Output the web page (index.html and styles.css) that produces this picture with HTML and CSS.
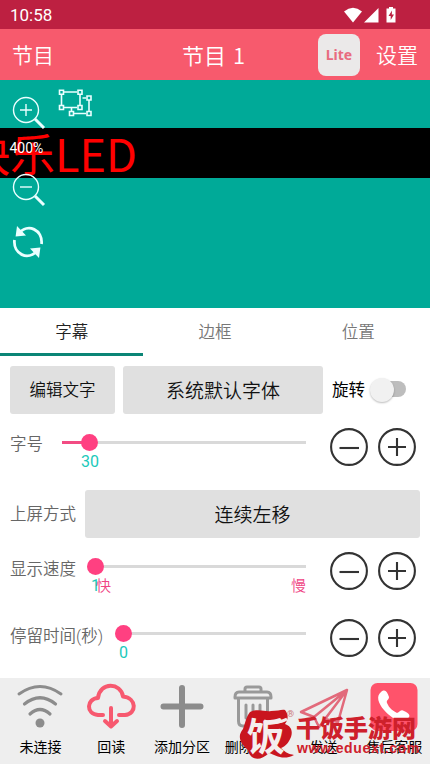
FILE: index.html
```html
<!DOCTYPE html>
<html lang="zh-CN">
<head>
<meta charset="utf-8">
<title>节目 1</title>
<link rel="stylesheet" href="styles.css">
</head>
<body>
<svg class="defs" aria-hidden="true">
  <symbol id="minus" viewBox="0 0 40 40"><circle cx="20" cy="20" r="17.900"/><path d="M10.500 21H30"/></symbol>
  <symbol id="plus" viewBox="0 0 40 40"><circle cx="20" cy="20" r="17.900"/><path d="M11 20H29M20 11V29"/></symbol>
</svg>
<div class="status">
  <span>10:58</span>
  <svg width="56" height="18" viewBox="0 0 56 18" fill="#fff"><path d="M0 5.500Q9 -1.800 18 5.500L9 16.500Z"/><path d="M34.500 2V16.500H20Z"/><path d="M45 2.500V1h4v1.500h2.500V16.500H42.500V2.500Z"/><path d="M48 4.500L44.500 10h2.200v4L50 8.500h-2.200Z" fill="#bd2041"/></svg>
</div>
<header class="bar">
  <span class="back">节目</span>
  <h1>节目 1</h1>
  <span class="lite">Lite</span>
  <span class="set">设置</span>
</header>
<section class="stage">
  <div class="screen"><span class="led">快乐LED</span></div>
  <svg class="tool zoom-in" width="36" height="36" viewBox="0 0 36 36"><circle cx="15" cy="15" r="12.500"/><path d="M9 15H21M15 9V21"/><path class="handle" d="M24 24L33 33"/></svg>
  <span class="percent">400%</span>
  <svg class="tool zoom-out" width="36" height="36" viewBox="0 0 36 36"><circle cx="15" cy="15" r="12.500"/><path d="M9 15H21"/><path class="handle" d="M24 24L33 33"/></svg>
  <svg class="tool refresh" width="32" height="32" viewBox="0 0 32 32"><path class="arc" d="M6.500 7.500C16-3.500 31 4 29.500 18M25.500 24.500C16 35.500 1 28 2.500 14"/><path class="head" d="M5 0L3.600 10.500L14 9.500ZM27 32L28.400 21.500L18 22.500Z"/></svg>
  <svg class="tool group" width="36" height="30" viewBox="0 0 36 30"><path d="M6 3H19M3.500 6V16M22 6V16M6 18.500H19M24.500 9H28M31 11V22M16 24.500H28M13.500 22V19"/><path d="M1.500 1.200h4v4h-4zM20 1.200h4v4h-4zM1.500 16.500h4v4h-4zM20 16.500h4v4h-4zM29 7h4v4h-4zM29 22.500h4v4h-4zM11.500 22.500h4v4h-4z"/></svg>
</section>
<nav class="tabs"><span class="active">字幕</span><span>边框</span><span>位置</span></nav>
<main>
  <div class="row fonts">
    <button class="edit">编辑文字</button>
    <button class="font">系统默认字体</button>
    <span class="rotate">旋转</span>
    <span class="switch"></span>
  </div>
  <div class="row size">
    <span class="label">字号</span>
    <div class="slider"><i class="fill"></i><i class="thumb"></i><b class="value">30</b></div>
    <div class="steps"><svg><use href="#minus"/></svg><svg><use href="#plus"/></svg></div>
  </div>
  <div class="row mode"><span class="label">上屏方式</span><button>连续左移</button></div>
  <div class="row speed">
    <span class="label">显示速度</span>
    <div class="slider"><i class="thumb"></i><b class="value">1</b><em class="fast">快</em><em class="slow">慢</em></div>
    <div class="steps"><svg><use href="#minus"/></svg><svg><use href="#plus"/></svg></div>
  </div>
  <div class="row stay">
    <span class="label">停留时间(秒)</span>
    <div class="slider"><i class="thumb"></i><b class="value">0</b></div>
    <div class="steps"><svg><use href="#minus"/></svg><svg><use href="#plus"/></svg></div>
  </div>
</main>
<footer>
  <div class="item"><svg width="50" height="50" viewBox="0 0 50 50" fill="none" stroke="#8c8c8c" stroke-linecap="round"><path stroke-width="3" d="M4 16Q25 1 46 16"/><path stroke-width="3.200" d="M9.500 26Q25 13.500 40.500 26"/><path stroke-width="3.200" d="M15 36Q25 27 35 36"/><circle cx="25" cy="45" r="4.500" fill="#8c8c8c" stroke="none"/></svg><span>未连接</span></div>
  <div class="item"><svg width="50" height="50" viewBox="0 -2 50 50" fill="none" stroke="#f7596f" stroke-width="4" stroke-linecap="round" stroke-linejoin="round"><path d="M17 35H12C-.5 34 .5 18.500 12 18C14 1.500 35 2.500 37 16.500C51 18 51 34 39 35H33"/><path d="M25 28V46M19 41L25 46.500L31 41"/></svg><span>回读</span></div>
  <div class="item"><svg width="50" height="50" viewBox="0 0 50 50" stroke="#8c8c8c" stroke-width="6" stroke-linecap="round"><path d="M25 10V47M6.500 28.500H43.500"/></svg><span>添加分区</span></div>
  <div class="item"><svg width="50" height="50" viewBox="0 -2 50 50" fill="none" stroke="#999" stroke-width="3" stroke-linejoin="round" stroke-linecap="round"><path d="M17 12V9Q17 7 19 7H31Q33 7 33 9V12M11 12H39Q43 12 43 17V18H7V17Q7 12 11 12M10.500 18V41Q10.500 46 15 46H35Q39.500 46 39.500 41V18M18 25V38M25 25V38M32 25V38"/></svg><span>删除分区</span></div>
  <div class="item"><svg width="50" height="50" viewBox="0 -2 50 50" fill="none" stroke="#e26a7b" stroke-width="2.500" stroke-linejoin="round"><path d="M48 10L2 32L15 37L20 47L26 39L39 42ZM48 10L15 37M48 10L26 39M48 10L20 47"/></svg><span>发送</span></div>
  <div class="item"><svg width="50" height="50" viewBox="0 0 50 50"><rect x="1.500" y="5" width="47" height="48" rx="7" fill="#ff536b"/><path d="M12 14C16 11 18 13 20 19C20 22 17 22 18 25C20 30 24 33 28 35C31 34 32 31 35 33C41 36 42 38 38 41C32 46 22 40 15 32C9 25 7 18 12 14Z" fill="#fff"/></svg><span>售后客服</span></div>
  <div class="watermark">
    <svg width="58" height="54" viewBox="0 0 58 54"><path d="M12 4C20 0 27 4 33 3C40 3 44 1 47 2C51 7 50 12 47 16C53 18 55 23 53 29C51 34 48 38 43 40C48 45 51 46 56 47C45 53 37 47 31 45C22 54 12 52 10 42C2 36-1 28 5 21C7 16 8 9 12 4Z"/><path class="swash" d="M26 13Q38 17 49 11"/><text x="9" y="42" font-size="38">饭</text></svg>
    <i>®</i>
    <div class="brand"><strong>千饭手游网</strong><small>www.eduext.com</small></div>
  </div>
</footer>
</body>
</html>
```

FILE: styles.css
```css
* { box-sizing: border-box; }
body { margin: 0; width: 430px; height: 764px; overflow: hidden; background: #fff; font-family: Roboto, "Noto Sans CJK SC", sans-serif; font-weight: 350; color: #111; display: flex; flex-direction: column; }
svg { display: block; flex: none; overflow: visible; }
.defs { position: absolute; width: 0; height: 0; }
.status { height: 29px; background: #bd2041; color: #fff; display: flex; align-items: center; justify-content: space-between; padding: 0 30px 0 10px; font-size: 17px; font-weight: 400; }
.bar { height: 51px; background: #f75a6d; color: #fff; display: flex; align-items: center; font-size: 21px; line-height: 30px; padding: 3px 12px 0; }
.back { width: 170px; }
h1 { margin: -4px 0 0; font: 350 22px/30px "Noto Sans CJK SC", sans-serif; width: 136px; word-spacing: 2px; }
.lite { width: 42px; height: 42px; border-radius: 8px; background: #ebe9e9; color: #e86b7f; font: 700 14px/42px "Noto Sans", sans-serif; text-align: center; margin-top: -3px; }
.set { margin-left: auto; }
.stage { height: 228px; background: #00aa98; position: relative; padding-top: 48px; }
.screen { height: 50px; background: #000; overflow: hidden; }
.led { display: block; margin: 0 0 0 -35px; font: 400 45px/50px "Noto Sans CJK SC", sans-serif; color: #f00; white-space: nowrap; }
.tool { position: absolute; fill: none; stroke: #eaffff; stroke-width: 1.400; }
.tool .handle { stroke-width: 3; }
.tool .arc { stroke-width: 2.800; }
.tool .head { fill: #eaffff; stroke: none; }
.zoom-in { left: 11px; top: 15px; }
.zoom-out { left: 11px; top: 92px; }
.refresh { left: 11.500px; top: 145.500px; }
.group { left: 58px; top: 9px; stroke-width: 1.600; }
.percent { position: absolute; left: 9.500px; top: 59px; color: #fff; font-size: 14px; line-height: 18px; font-weight: 400; }
.tabs { height: 48px; display: flex; font-size: 16.500px; color: #777; }
.tabs span { flex: 1; text-align: center; line-height: 49px; height: 48px; }
.tabs .active { color: #222; border-bottom: 3px solid #0b8576; }
main { height: 322px; padding: 10px 10px 0; }
.row { display: flex; }
button { border: 0; border-radius: 3px; background: #e0e0e0; font: inherit; font-size: 19px; color: #111; padding: 0 0 2px; height: 48px; }
.fonts { height: 62px; gap: 8px; }
.edit { width: 105px; font-size: 16.500px; }
.font { width: 200px; }
.rotate { font-size: 16.500px; line-height: 49px; font-weight: 400; color: #000; margin-left: 1px; }
.switch { width: 34px; height: 16px; border-radius: 8px; background: #bdbdbd; margin: 15px 0 0 -1px; position: relative; }
.switch::before { content: ""; position: absolute; left: -2px; top: -3.500px; width: 24px; height: 24px; border-radius: 50%; background: #f1f1f1; box-shadow: 0 1px 2px #0004; }
.label { font-size: 16.500px; color: #666; white-space: nowrap; line-height: 34px; }
.size { height: 62px; }
.mode { height: 61px; }
.mode .label { width: 75px; line-height: 49px; }
.mode button { flex: 1; }
.speed { height: 67px; }
.size .label { width: 52px; }
.speed .label { width: 86px; line-height: 37px; }
.stay .label { width: 114px; line-height: 37px; }
.slider { flex: 1; height: 3px; margin-top: 13px; background: #d9d9d9; position: relative; }
.speed .slider, .stay .slider { margin-top: 14px; }
.fill { position: absolute; left: 0; top: 0; width: 28px; height: 3px; background: #f24c83; }
.thumb { position: absolute; left: -9px; top: -7px; width: 17px; height: 17px; border-radius: 50%; background: #ff4081; }
.size .thumb { left: 19px; }
.value, .slider em { position: absolute; top: 11px; font-size: 16px; line-height: 20px; font-weight: 400; font-style: normal; color: #1cc9ba; white-space: nowrap; }
.size .value { left: 19px; }
.speed .value { left: -5px; }
.stay .value { left: -5px; }
.slider em { color: #ef4383; font-size: 15px; font-weight: 350; }
.slider .fast { left: 0; }
.slider .slow { right: 0; }
.steps { display: flex; gap: 7.500px; margin: -1px 3.500px 0 23px; }
.steps svg { width: 40px; height: 40px; fill: none; stroke: #333; stroke-width: 2.100; }
.speed .steps, .stay .steps { margin-top: 0; }
footer { height: 86px; background: #eee; display: flex; padding: 0 0 0 5px; position: relative; }
.item { flex: none; width: 70.800px; display: flex; flex-direction: column; align-items: center; }
.item span { font-size: 14px; line-height: 20px; margin-top: 9px; font-weight: 400; color: #000; white-space: nowrap; }
.watermark { position: absolute; left: 238px; top: 30px; display: flex; color: #ce202b; font-weight: 900; }
.watermark path { fill: #c9151e; }
.watermark .swash { fill: none; stroke: #f4eeee; stroke-width: 3; }
.watermark text { font-family: "Noto Sans CJK SC", sans-serif; font-weight: 700; fill: #f4eeee; }
.watermark > i { font: 9px/12px Roboto, sans-serif; margin: 0 0 0 -9px; width: 9px; color: #c77; }
.brand { display: flex; flex-direction: column; }
.brand strong { font: 900 24px/28px "Noto Sans CJK SC", sans-serif; margin-top: 5px; }
.brand small { font: 700 14px/15px "Liberation Sans", sans-serif; margin-left: 1px; letter-spacing: .65px; }
```
